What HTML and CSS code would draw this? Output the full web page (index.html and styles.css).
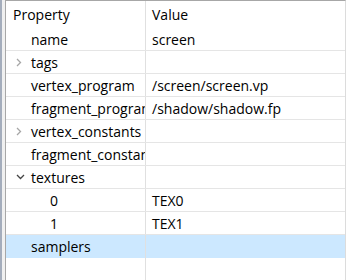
FILE: index.html
```html
<!DOCTYPE html>
<html>
<head>
<meta charset="utf-8">
<link rel="stylesheet" href="styles.css">
</head>
<body>
<div class="frame">
  <div class="edge"></div>
  <div class="gutter"></div>
  <div class="tree">
    <div class="row header">
      <div class="cell prop"><span class="hdr">Property</span></div>
      <div class="cell val"><span class="hdr">Value</span></div>
    </div>
    <div class="row first">
      <div class="cell prop l0"><span class="tw"></span>name</div>
      <div class="cell val">screen</div>
    </div>
    <div class="row">
      <div class="cell prop l0"><span class="tw"><svg width="6" height="9" viewBox="0 0 6 9"><polyline points="1,1 4.5,4.5 1,8" fill="none" stroke="#a6a6a6" stroke-width="1.3"/></svg></span>tags</div>
      <div class="cell val"></div>
    </div>
    <div class="row">
      <div class="cell prop l0"><span class="tw"></span>vertex_program</div>
      <div class="cell val">/screen/screen.vp</div>
    </div>
    <div class="row">
      <div class="cell prop l0"><span class="tw"></span>fragment_program</div>
      <div class="cell val">/shadow/shadow.fp</div>
    </div>
    <div class="row">
      <div class="cell prop l0"><span class="tw"><svg width="6" height="9" viewBox="0 0 6 9"><polyline points="1,1 4.5,4.5 1,8" fill="none" stroke="#a6a6a6" stroke-width="1.3"/></svg></span>vertex_constants</div>
      <div class="cell val"></div>
    </div>
    <div class="row">
      <div class="cell prop l0"><span class="tw"></span>fragment_constants</div>
      <div class="cell val"></div>
    </div>
    <div class="row">
      <div class="cell prop l0"><span class="tw"><svg width="9" height="6" viewBox="0 0 9 6"><polyline points="1,1 4.5,4.5 8,1" fill="none" stroke="#444" stroke-width="1.3"/></svg></span>textures</div>
      <div class="cell val"></div>
    </div>
    <div class="row">
      <div class="cell prop l1"><span class="tw"></span>0</div>
      <div class="cell val">TEX0</div>
    </div>
    <div class="row">
      <div class="cell prop l1"><span class="tw"></span>1</div>
      <div class="cell val">TEX1</div>
    </div>
    <div class="row selected">
      <div class="cell prop l0"><span class="tw"></span>samplers</div>
      <div class="cell val"></div>
    </div>
    <div class="row filler">
      <div class="cell prop"></div>
      <div class="cell val"></div>
    </div>
  </div>
</div>
</body>
</html>
```
FILE: styles.css
```css
html, body {
  margin: 0;
  padding: 0;
  background: #ffffff;
}
body {
  font-family: "Open Sans", "Noto Sans", sans-serif;
  font-size: 14px;
  color: #000;
  width: 347px;
  height: 280px;
  overflow: hidden;
}
.frame {
  display: flex;
  height: 280px;
}
.edge {
  width: 2px;
  background: #a4adbc;
}
.gutter {
  width: 3px;
  background: #f0f0f0;
}
.tree {
  flex: 1;
  display: flex;
  flex-direction: column;
  border-left: 1px solid #a7a7a7;
  border-top: 1px solid #a7a7a7;
  border-right: 1px solid #dcdcdc;
  margin-right: 1px;
  background: #fff;
}
.row {
  display: grid;
  grid-template-columns: 140px 1fr;
  height: 22px;
  border-bottom: 1px solid #e5e5e5;
}
.row.header {
  height: 27px;
  border-bottom: none;
}
.row.first {
  height: 22px;
}
.row.selected {
  background: #cce8ff;
  border-bottom: none;
  height: 23px;
}
.row.filler {
  flex: 1;
  border-bottom: none;
}
.cell {
  display: flex;
  align-items: center;
  white-space: nowrap;
  overflow: hidden;
}
.prop {
  border-right: 1px solid #e0e0e0;
}
.val {
  padding-left: 6px;
}
.header .prop {
  padding-left: 7px;
}
.header .val {
  padding-left: 6px;
}
.l0 {
  padding-left: 8px;
}
.l1 {
  padding-left: 27px;
}
.tw {
  width: 17px;
  flex: none;
  display: flex;
  align-items: center;
  justify-content: flex-start;
  padding-left: 2px;
  box-sizing: border-box;
}
.tw svg {
  display: block;
}
```
